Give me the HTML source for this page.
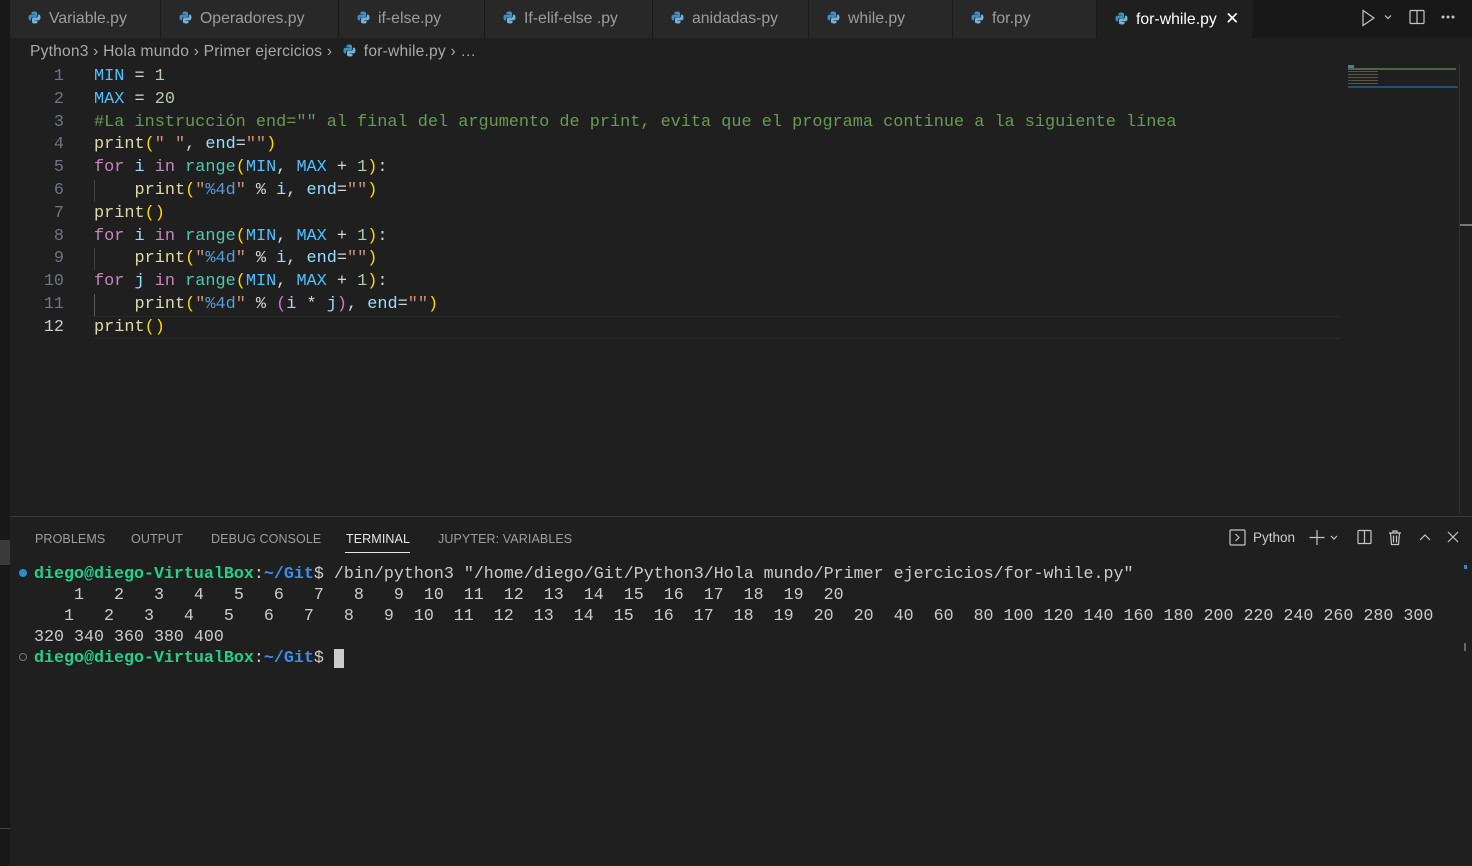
<!DOCTYPE html>
<html><head><meta charset="utf-8"><style>
*{margin:0;padding:0;box-sizing:border-box}
body{width:1472px;height:866px;background:#1f1f1f;position:relative;overflow:hidden;font-family:"Liberation Sans",sans-serif}
.abs{position:absolute}
.tabbar{left:10px;top:0;width:1462px;height:38px;background:#181818}
.tab{position:absolute;top:0;height:38px;background:#282828;border-right:1px solid #1a1a1a;color:#9d9d9d;font-size:15.8px;line-height:37px;padding-left:18px;white-space:nowrap}
.tab.act{background:#1f1f1f;color:#fff}
.py{display:inline-block;width:13px;height:13px;vertical-align:-1px;margin-right:8px}
.code{font-family:"Liberation Mono",monospace;font-size:16.88px;white-space:pre;position:absolute}
.ln{position:absolute;left:20px;width:44px;text-align:right;color:#6e7681;font-family:"Liberation Mono",monospace;font-size:16.8px}
.y{color:#dcdcaa}.k{color:#c586c0}.v{color:#9cdcfe}.c{color:#4fc1ff}.n{color:#b5cea8}.s{color:#ce9178}.b{color:#569cd6}.g{color:#6a9955}.t{color:#4ec9b0}.p1{color:#ffd700}.p2{color:#da70d6}.w{color:#d4d4d4}
.gr{color:#23d18b;font-weight:bold}.bl{color:#3b8eea;font-weight:bold}
.ptab{position:absolute;top:532px;font-size:12.5px;color:#9d9d9d;letter-spacing:.1px}
</style></head><body>
<div class="abs" style="left:0;top:0;width:10px;height:866px;background:#181818"></div>
<div class="abs" style="left:0;top:540px;width:10px;height:25px;background:#3a3a3a"></div>
<div class="abs tabbar"></div>
<svg width="0" height="0" style="position:absolute"><defs><g id="pyi"><path d="M6.3 0.5c-3 0-2.8 1.3-2.8 1.3v1.4h2.9v.5H2.3S.5 3.5.5 6.5s1.6 2.9 1.6 2.9h1V8s-.1-1.6 1.6-1.6h2.8s1.5 0 1.5-1.5V2S9.2.5 6.3.5z" fill="#3f8ec0"/><path d="M6.7 12.5c3 0 2.8-1.3 2.8-1.3V9.8H6.6v-.5h4.1s1.8.2 1.8-2.8-1.6-2.9-1.6-2.9h-1V5s.1 1.6-1.6 1.6H5.5S4 6.6 4 8.1V11s-.2 1.5 2.7 1.5z" fill="#79b0d6"/></g></defs></svg>
<div class="tab" style="left:10px;width:151px"><svg class="py" viewBox="0 0 13 13"><use href="#pyi"/></svg>Variable.py</div>
<div class="tab" style="left:161px;width:178px"><svg class="py" viewBox="0 0 13 13"><use href="#pyi"/></svg>Operadores.py</div>
<div class="tab" style="left:339px;width:146px"><svg class="py" viewBox="0 0 13 13"><use href="#pyi"/></svg>if-else.py</div>
<div class="tab" style="left:485px;width:168px"><svg class="py" viewBox="0 0 13 13"><use href="#pyi"/></svg>If-elif-else .py</div>
<div class="tab" style="left:653px;width:156px"><svg class="py" viewBox="0 0 13 13"><use href="#pyi"/></svg>anidadas-py</div>
<div class="tab" style="left:809px;width:144px"><svg class="py" viewBox="0 0 13 13"><use href="#pyi"/></svg>while.py</div>
<div class="tab" style="left:953px;width:144px"><svg class="py" viewBox="0 0 13 13"><use href="#pyi"/></svg>for.py</div>
<div class="tab act" style="left:1097px;width:156px"><svg class="py" viewBox="0 0 13 13"><use href="#pyi"/></svg>for-while.py <span style="margin-left:4px;font-size:17px">✕</span></div>
<svg class="abs" style="left:1360px;top:8px" width="100" height="20" viewBox="0 0 100 20" fill="none" stroke="#c5c5c5" stroke-width="1.2"><path d="M3 2.5l11 7.5-11 7.5z"/><path d="M25 7.5l3 3 3-3"/><rect x="50" y="2.5" width="14" height="13" rx="1"/><path d="M57 2.5v13"/><circle cx="83" cy="9" r=".9" fill="#c5c5c5"/><circle cx="88" cy="9" r=".9" fill="#c5c5c5"/><circle cx="93" cy="9" r=".9" fill="#c5c5c5"/></svg>
<div class="abs" style="left:30px;top:43px;font-size:15.6px;letter-spacing:.2px;color:#a9a9a9;white-space:nowrap">Python3 <span>›</span> Hola mundo <span>›</span> Primer ejercicios <span>›</span> <svg class="py" viewBox="0 0 13 13" style="margin-left:6px"><use href="#pyi"/></svg>for-while.py › …</div>
<div class="abs" style="left:94px;top:316px;width:1246px;height:23px;border-top:1px solid #282828;border-bottom:1px solid #282828"></div>
<div class="abs" style="left:94px;top:180px;width:1px;height:22px;background:#404040"></div>
<div class="abs" style="left:94px;top:248px;width:1px;height:22px;background:#404040"></div>
<div class="abs" style="left:94px;top:294px;width:1px;height:22px;background:#585858"></div>
<div class="ln" style="top:66px;line-height:22.8px">1<br>2<br>3<br>4<br>5<br>6<br>7<br>8<br>9<br>10<br>11<br><span style="color:#ccc">12</span></div>
<div class="code" style="left:94px;top:66px;line-height:22.8px"><span class="c">MIN</span><span class="w"> = </span><span class="n">1</span>
<span class="c">MAX</span><span class="w"> = </span><span class="n">20</span>
<span class="g">#La instrucción end="" al final del argumento de print, evita que el programa continue a la siguiente línea</span>
<span class="y">print</span><span class="p1">(</span><span class="s">" "</span><span class="w">, </span><span class="v">end</span><span class="w">=</span><span class="s">""</span><span class="p1">)</span>
<span class="k">for</span><span class="w"> </span><span class="v">i</span><span class="w"> </span><span class="k">in</span><span class="w"> </span><span class="t">range</span><span class="p1">(</span><span class="c">MIN</span><span class="w">, </span><span class="c">MAX</span><span class="w"> + </span><span class="n">1</span><span class="p1">)</span><span class="w">:</span>
    <span class="y">print</span><span class="p1">(</span><span class="s">"</span><span class="b">%4d</span><span class="s">"</span><span class="w"> % </span><span class="v">i</span><span class="w">, </span><span class="v">end</span><span class="w">=</span><span class="s">""</span><span class="p1">)</span>
<span class="y">print</span><span class="p1">()</span>
<span class="k">for</span><span class="w"> </span><span class="v">i</span><span class="w"> </span><span class="k">in</span><span class="w"> </span><span class="t">range</span><span class="p1">(</span><span class="c">MIN</span><span class="w">, </span><span class="c">MAX</span><span class="w"> + </span><span class="n">1</span><span class="p1">)</span><span class="w">:</span>
    <span class="y">print</span><span class="p1">(</span><span class="s">"</span><span class="b">%4d</span><span class="s">"</span><span class="w"> % </span><span class="v">i</span><span class="w">, </span><span class="v">end</span><span class="w">=</span><span class="s">""</span><span class="p1">)</span>
<span class="k">for</span><span class="w"> </span><span class="v">j</span><span class="w"> </span><span class="k">in</span><span class="w"> </span><span class="t">range</span><span class="p1">(</span><span class="c">MIN</span><span class="w">, </span><span class="c">MAX</span><span class="w"> + </span><span class="n">1</span><span class="p1">)</span><span class="w">:</span>
    <span class="y">print</span><span class="p1">(</span><span class="s">"</span><span class="b">%4d</span><span class="s">"</span><span class="w"> % </span><span class="p2">(</span><span class="v">i</span><span class="w"> * </span><span class="v">j</span><span class="p2">)</span><span class="w">, </span><span class="v">end</span><span class="w">=</span><span class="s">""</span><span class="p1">)</span>
<span class="y">print</span><span class="p1">()</span></div>
<!-- minimap -->
<div class="abs" style="left:1348px;top:65px;width:6px;height:3px;background:#4fc1ff;opacity:.6"></div>
<div class="abs" style="left:1348px;top:68px;width:108px;height:2px;background:#6a9955;opacity:.6"></div>
<div class="abs" style="left:1348px;top:71px;width:30px;height:14px;background:repeating-linear-gradient(#7a7a5a 0 1px,transparent 1px 3px);opacity:.6"></div>
<div class="abs" style="left:1348px;top:86px;width:110px;height:2px;background:#264f78"></div>
<div class="abs" style="left:1459px;top:64px;width:1px;height:450px;background:#333"></div>
<div class="abs" style="left:1460px;top:224px;width:12px;height:2px;background:#777"></div>
<!-- panel -->
<div class="abs" style="left:10px;top:516px;width:1462px;height:1px;background:#3a3a3a"></div>
<div class="ptab" style="left:35px">PROBLEMS</div>
<div class="ptab" style="left:131px">OUTPUT</div>
<div class="ptab" style="left:211px">DEBUG CONSOLE</div>
<div class="ptab" style="left:346px;color:#e7e7e7">TERMINAL</div>
<div class="abs" style="left:345px;top:552px;width:65px;height:1px;background:#e7e7e7"></div>
<div class="ptab" style="left:438px">JUPYTER: VARIABLES</div>
<svg class="abs" style="left:1228px;top:528px" width="236" height="20" viewBox="0 0 236 20" fill="none" stroke="#c5c5c5" stroke-width="1.2"><rect x="2" y="2" width="15" height="15" rx="1"/><path d="M7.5 6l3.5 3.5-3.5 3.5"/><path d="M89 2v15M81.5 9.5h15"/><path d="M103 8l3 3 3-3"/><rect x="130" y="2.5" width="13" height="13" rx="1"/><path d="M136.5 2.5v13"/><path d="M161 5h12M165 5V3h4v2M162.5 5l1 11.5h7l1-11.5M165.5 7.5v7M168.5 7.5v7"/><path d="M192 12l5-5 5 5"/><path d="M220 4l10 10M230 4l-10 10"/></svg>
<div class="abs" style="left:1253px;top:530px;font-size:13.5px;color:#ccc">Python</div>
<div class="abs" style="left:19px;top:569px;width:8px;height:8px;border-radius:50%;background:#2f8bc6"></div>
<div class="abs" style="left:19px;top:653px;width:8px;height:8px;border-radius:50%;border:1px solid #777"></div>
<div class="code w" style="left:34px;top:564px;line-height:21px;color:#cccccc;font-size:16.67px"><span class="gr">diego@diego-VirtualBox</span>:<span class="bl">~/Git</span>$ /bin/python3 "/home/diego/Git/Python3/Hola mundo/Primer ejercicios/for-while.py"
    1   2   3   4   5   6   7   8   9  10  11  12  13  14  15  16  17  18  19  20
   1   2   3   4   5   6   7   8   9  10  11  12  13  14  15  16  17  18  19  20  20  40  60  80 100 120 140 160 180 200 220 240 260 280 300
320 340 360 380 400
<span class="gr">diego@diego-VirtualBox</span>:<span class="bl">~/Git</span>$ <span style="background:#ccc">&nbsp;</span></div>
<div class="abs" style="left:1464px;top:565px;width:3px;height:4px;background:#2f8bc6"></div>
<div class="abs" style="left:1464px;top:643px;width:2px;height:8px;background:#666"></div>
<div class="abs" style="left:0;top:828px;width:10px;height:1px;background:#444"></div>
</body></html>
